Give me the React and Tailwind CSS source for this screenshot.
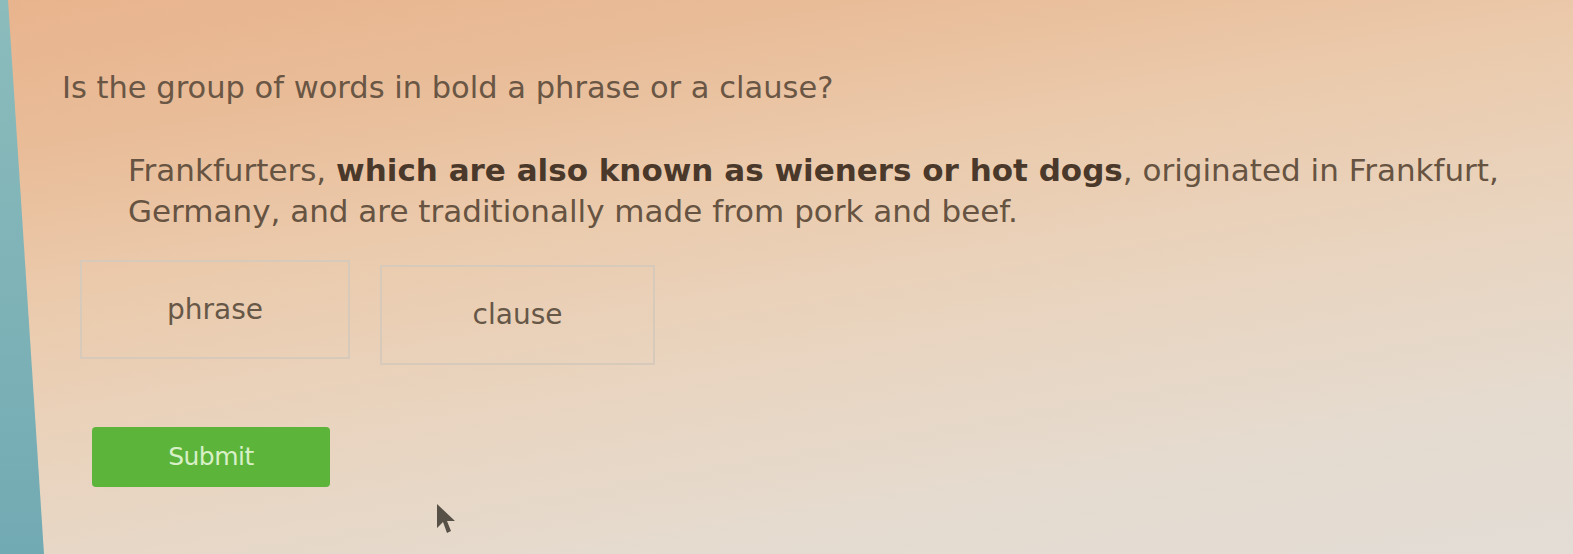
import React from 'react';

const Cursor = () => (
    <svg width="24" height="36" viewBox="0 0 24 36" className="absolute left-[435px] top-[502px]">
        <path d="M2 2 L2 26 L8 20 L12 31 L16 29 L12 19 L20 19 Z" fill="#3d3830" opacity="0.85" />
    </svg>
);

const Choice = ({ label, className }) => (
    <button
        className={`flex items-center justify-center border-2 border-[#d8cabb] text-[28px] text-[#675747] ${className}`}
    >
        {label}
    </button>
);

const App = () => {
    return (
        <div className="relative flex h-[554px] w-[1573px] overflow-hidden bg-[linear-gradient(170deg,#e8b48e_0%,#e9bc98_18%,#ebcbad_38%,#e9d4bf_58%,#e5dbcf_80%,#e3ddd6_100%)] font-['DejaVu_Sans',sans-serif]">
            {/* teal edge of the screen */}
            <div className="absolute inset-y-0 left-0 w-[46px] bg-[linear-gradient(180deg,#8cbcbc,#72aab3)] [clip-path:polygon(0_0,8px_0,44px_100%,0_100%)]" />

            <div className="flex flex-col pl-[62px] pt-[68px]">
                <h1 className="text-[30.5px] leading-[40px] text-[#6a5644]">
                    Is the group of words in bold a phrase or a clause?
                </h1>

                <p className="ml-[66px] mt-[42px] w-[1450px] text-[31px] leading-[41px] text-[#665341]">
                    Frankfurters,{' '}
                    <b className="font-bold text-[#4a392b]">which are also known as wieners or hot dogs</b>, originated in Frankfurt,
                    <br />
                    Germany, and are traditionally made from pork and beef.
                </p>

                <div className="ml-[18px] mt-[28px] flex items-start gap-[30px]">
                    <Choice label="phrase" className="h-[99px] w-[270px]" />
                    <Choice label="clause" className="mt-[5px] h-[100px] w-[275px]" />
                </div>

                <button className="ml-[30px] mt-[62px] h-[60px] w-[238px] rounded-[4px] bg-[#5db43a] text-[25px] tracking-[-0.5px] text-[#d8f0c8]">
                    Submit
                </button>
            </div>

            <Cursor />
        </div>
    );
};

export default App;
